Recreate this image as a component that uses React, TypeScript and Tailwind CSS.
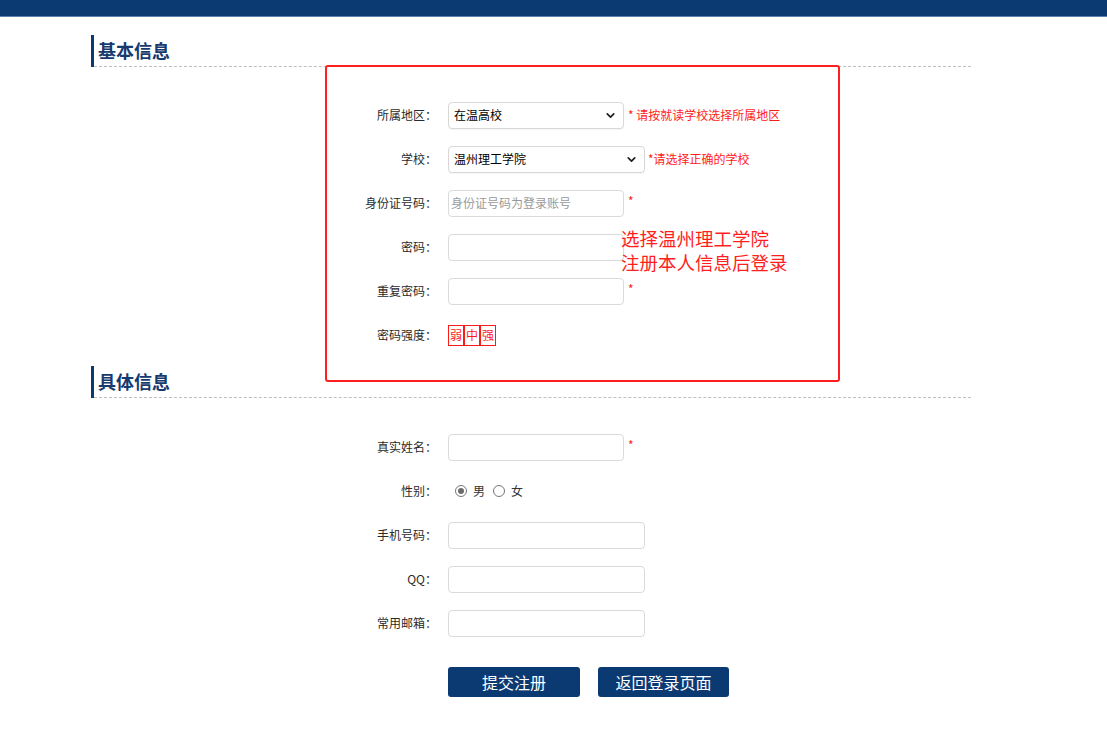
import { ChevronDown } from "lucide-react";

const font = "font-['Microsoft_YaHei','Noto_Sans_CJK_SC',sans-serif]";

function SectionTitle({ title }: { title: string }) {
  return (
    <div className="flex h-[32px] border-l-[3px] border-[#0b3a73]">
      <div className="flex flex-1 items-center border-b border-dashed border-[#bfbfbf] pl-[4px] text-[18px] font-bold text-[#163a6e]">
        {title}
      </div>
    </div>
  );
}

function Row({ label, children }: { label: string; children: React.ReactNode }) {
  return (
    <div className="flex h-[44px] items-center">
      <div className="w-[357px] pr-[11px] text-right text-[12px] text-[#2a2a2a]">{label}：</div>
      <div className="flex items-center">{children}</div>
    </div>
  );
}

function Select({ value, width }: { value: string; width: string }) {
  return (
    <div
      className={`flex h-[27px] ${width} items-center justify-between rounded-[4px] border border-[#dcd7d7] bg-white pl-[5px] pr-[6px] text-[12px] text-black shadow-[0_1px_1px_rgba(0,0,0,0.04)]`}
    >
      <span>{value}</span>
      <ChevronDown size={13} strokeWidth={3.2} className="text-[#222]" />
    </div>
  );
}

function Input({ width, placeholder }: { width: string; placeholder?: string }) {
  return (
    <div
      className={`flex h-[27px] ${width} items-center rounded-[4px] border border-[#dadada] bg-white pl-[2px] text-[12px] text-[#9a9a9a]`}
    >
      {placeholder}
    </div>
  );
}

function Star({ text = "*" }: { text?: string }) {
  return <span className="ml-[4px] self-start pt-[2px] text-[12px] text-[#ff1a1a]">{text}</span>;
}

function Radio({ checked, label }: { checked?: boolean; label: string }) {
  return (
    <label className="flex items-center gap-[6px] text-[12px] text-[#333]">
      <span className="flex h-[12px] w-[12px] items-center justify-center rounded-full border border-[#767676] bg-white">
        {checked && <span className="h-[6px] w-[6px] rounded-full bg-[#6b6b6b]" />}
      </span>
      {label}
    </label>
  );
}

function StrengthBox({ text }: { text: string }) {
  return (
    <span className="flex h-[21px] w-[16px] items-center justify-center overflow-visible border border-[#ff1a1a] text-[12px] leading-none">
      {text}
    </span>
  );
}

export default function App() {
  return (
    <div className={`relative min-h-[748px] w-[1107px] bg-white ${font}`}>
      {/* top bar */}
      <div className="h-[17px] border-b border-[#5b7fae] bg-[#0b3a73]" />

      <div className="ml-[91px] mt-[18px] w-[880px]">
        <SectionTitle title="基本信息" />
        <div className="pt-[26px]">
          <Row label="所属地区">
            <Select value="在温高校" width="w-[176px]" />
            <span className="ml-[4px] text-[12px] text-[#ff1a1a]">* 请按就读学校选择所属地区</span>
          </Row>
          <Row label="学校">
            <Select value="温州理工学院" width="w-[197px]" />
            <span className="ml-[3px] text-[12px] text-[#ff1a1a]">*请选择正确的学校</span>
          </Row>
          <Row label="身份证号码">
            <Input width="w-[176px]" placeholder="身份证号码为登录账号" />
            <Star />
          </Row>
          <Row label="密码">
            <Input width="w-[176px]" />
          </Row>
          <Row label="重复密码">
            <Input width="w-[176px]" />
            <Star />
          </Row>
          <Row label="密码强度">
            <div className="flex text-[#ff1a1a]">
              <StrengthBox text="弱" />
              <StrengthBox text="中" />
              <StrengthBox text="强" />
            </div>
          </Row>
        </div>

        <div className="mt-[9px]">
          <SectionTitle title="具体信息" />
        </div>
        <div className="pt-[27px]">
          <Row label="真实姓名">
            <Input width="w-[176px]" />
            <Star />
          </Row>
          <Row label="性别">
            <div className="flex items-center gap-[8px] pl-[7px]">
              <Radio checked label="男" />
              <Radio label="女" />
            </div>
          </Row>
          <Row label="手机号码">
            <Input width="w-[197px]" />
          </Row>
          <Row label="QQ">
            <Input width="w-[197px]" />
          </Row>
          <Row label="常用邮箱">
            <Input width="w-[197px]" />
          </Row>
        </div>

        <div className="mt-[22px] flex gap-[18px] pl-[357px]">
          <button className="h-[30px] w-[132px] rounded-[3px] bg-[#0b3a73] text-[16px] text-white">提交注册</button>
          <button className="h-[30px] w-[131px] rounded-[3px] bg-[#0b3a73] text-[16px] text-white">返回登录页面</button>
        </div>
      </div>

      {/* annotation overlay */}
      <div className="pointer-events-none absolute left-[325px] top-[65px] h-[317px] w-[515px] rounded-[3px] border-2 border-[#ff1f1f]" />
      <div className="pointer-events-none absolute left-[621px] top-[226px] text-[18.5px] leading-[24px] text-[#ff1f1f]">
        选择温州理工学院
        <br />
        注册本人信息后登录
      </div>
    </div>
  );
}
